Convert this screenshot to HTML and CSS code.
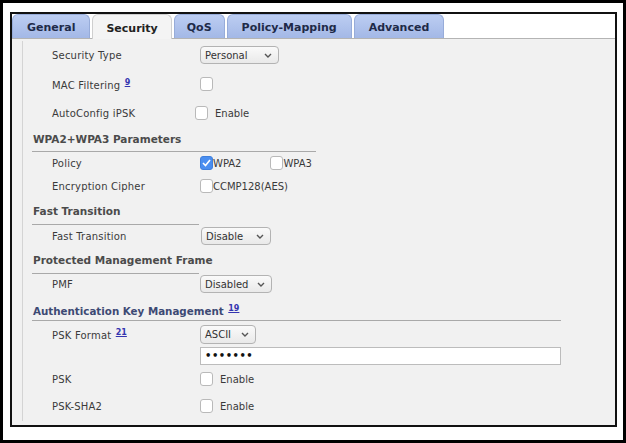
FILE: index.html
```html
<!DOCTYPE html>
<html lang="en">
<head>
    <meta charset="UTF-8">
    <title>WLAN Security</title>
    <link rel="stylesheet" href="styles.css">
</head>
<body>
    <div class="frame">
        <div class="window">
            <nav class="tabs">
                <span class="tab">General</span>
                <span class="tab active">Security</span>
                <span class="tab narrow">QoS</span>
                <span class="tab">Policy-Mapping</span>
                <span class="tab">Advanced</span>
            </nav>
            <div class="panel">
                <div class="form">
                    <div class="row h28">
                        <span class="label">Security Type</span>
                        <span class="select w-personal">Personal
                            <svg class="chev" width="8" height="5" viewBox="0 0 8 5"><path d="M1 1l3 3 3-3" fill="none" stroke="#555" stroke-width="1.4"/></svg>
                        </span>
                    </div>
                    <div class="row h30">
                        <span class="label">MAC Filtering <a class="ref">9</a></span>
                        <span class="opt"><span class="box"></span></span>
                    </div>
                    <div class="row h28">
                        <span class="label">AutoConfig iPSK</span>
                        <span class="opt shift-left"><span class="box"></span><span class="opt-text spaced">Enable</span></span>
                    </div>

                    <div class="heading line-mid">WPA2+WPA3 Parameters</div>
                    <div class="row h22">
                        <span class="label">Policy</span>
                        <span class="opts">
                            <span class="opt"><span class="box checked"><svg width="9" height="8" viewBox="0 0 9 8"><path d="M1 4l2.5 2.5L8 1" fill="none" stroke="#fff" stroke-width="1.6"/></svg></span><span class="opt-text">WPA2</span></span>
                            <span class="opt"><span class="box"></span><span class="opt-text">WPA3</span></span>
                        </span>
                    </div>
                    <div class="row h24">
                        <span class="label">Encryption Cipher</span>
                        <span class="opt"><span class="box"></span><span class="opt-text">CCMP128(AES)</span></span>
                    </div>

                    <div class="heading line-short">Fast Transition</div>
                    <div class="row h22">
                        <span class="label">Fast Transition</span>
                        <span class="select w-disable">Disable
                            <svg class="chev" width="8" height="5" viewBox="0 0 8 5"><path d="M1 1l3 3 3-3" fill="none" stroke="#555" stroke-width="1.4"/></svg>
                        </span>
                    </div>

                    <div class="heading line-short">Protected Management Frame</div>
                    <div class="row h20">
                        <span class="label">PMF</span>
                        <span class="select w-disabled">Disabled
                            <svg class="chev" width="8" height="5" viewBox="0 0 8 5"><path d="M1 1l3 3 3-3" fill="none" stroke="#555" stroke-width="1.4"/></svg>
                        </span>
                    </div>

                    <div class="heading line-long blue">Authentication Key Management <a class="ref">19</a></div>
                    <div class="row h26">
                        <span class="label">PSK Format <a class="ref">21</a></span>
                        <span class="select w-ascii">ASCII
                            <svg class="chev" width="8" height="5" viewBox="0 0 8 5"><path d="M1 1l3 3 3-3" fill="none" stroke="#555" stroke-width="1.4"/></svg>
                        </span>
                    </div>
                    <div class="row h18">
                        <span class="label"></span>
                        <span class="password">&bull;&bull;&bull;&bull;&bull;&bull;&bull;</span>
                    </div>
                    <div class="row h28">
                        <span class="label">PSK</span>
                        <span class="opt"><span class="box"></span><span class="opt-text spaced">Enable</span></span>
                    </div>
                    <div class="row h26">
                        <span class="label">PSK-SHA2</span>
                        <span class="opt"><span class="box"></span><span class="opt-text spaced">Enable</span></span>
                    </div>
                </div>
            </div>
        </div>
    </div>
</body>
</html>
```

FILE: styles.css
```css
body {
    margin: 0;
    padding: 0;
    background: #fff;
    font-family: 'DejaVu Sans', Verdana, sans-serif;
    font-size: 10px;
    color: #3c3c3c;
}
.frame {
    width: 626px;
    height: 443px;
    box-sizing: border-box;
    border: 3px solid #000;
    padding: 9px 6px 13px 7px;
    background: #fff;
}
.window {
    height: 100%;
    box-sizing: border-box;
    border: 2px solid #111;
    display: flex;
    flex-direction: column;
    background: #fff;
}
.tabs {
    display: flex;
    gap: 2px;
    height: 24px;
    border-bottom: 1px solid #b4b4b4;
}
.tab {
    display: flex;
    align-items: center;
    padding: 2px 14px 0;
    font-size: 11px;
    font-weight: bold;
    color: #1e2a48;
    background: linear-gradient(#bccdf2, #a3b8e6);
    border: 1px solid #97acd9;
    border-bottom: none;
    border-radius: 6px 6px 0 0;
}
.tab.narrow {
    padding: 2px 12px 0;
}
.tab.active {
    background: #f4f4f4;
    border-color: #cfcfcf;
    margin-bottom: -1px;
    padding: 2px 13px 0;
    color: #222;
}
.panel {
    flex: 1;
    background: #f1f1f1;
    padding: 2px 0 4px 10px;
    display: flex;
}
.form {
    flex: 1;
    border-left: 1px solid #d4d4d4;
    padding-left: 9px;
}
.row {
    display: grid;
    grid-template-columns: 168px auto;
    align-items: center;
}
.h18 { height: 18px; }
.h20 { height: 20px; }
.h22 { height: 22px; }
.h24 { height: 24px; }
.h26 { height: 26px; }
.h28 { height: 28px; }
.h30 { height: 30px; }
.label {
    padding-left: 20px;
    color: #3a3a3a;
    letter-spacing: 0.2px;
    white-space: nowrap;
}
.ref {
    font-size: 8px;
    font-weight: bold;
    color: #3535b0;
    text-decoration: underline;
    vertical-align: 4px;
    margin-left: 1px;
    letter-spacing: 0;
}
.heading {
    height: 24px;
    line-height: 24px;
    padding-left: 1px;
    font-size: 10.5px;
    font-weight: bold;
    color: #4b4b4b;
    border-bottom: 1px solid #a9a9a9;
}
.heading.line-short { height: 26px; line-height: 26px; width: 166px; white-space: nowrap; }
.heading.line-mid { width: 283px; }
.heading.line-long {
    width: 529px;
    height: 27px;
    line-height: 24px;
    box-sizing: border-box;
    padding-top: 3px;
    font-size: 10.3px;
}
.heading.blue { color: #3d4a74; }
.select {
    display: flex;
    align-items: center;
    justify-content: space-between;
    box-sizing: border-box;
    height: 18px;
    padding: 0 6px 0 4px;
    border: 1px solid #b3b3b3;
    border-radius: 4px;
    background: linear-gradient(#fafafa, #e9e9e9);
    color: #333;
}
.w-personal { width: 79px; }
.w-disable { width: 70px; margin-left: 1px; }
.w-disabled { width: 72px; }
.w-ascii { width: 56px; height: 19px; }
.opts {
    display: flex;
    gap: 29px;
}
.opt {
    display: flex;
    align-items: center;
}
.shift-left { margin-left: -5px; }
.box {
    width: 11px;
    height: 12px;
    border: 1px solid #b9b9b9;
    border-radius: 3px;
    background: #fff;
    display: flex;
    align-items: center;
    justify-content: center;
}
.box.checked {
    background: #4a8ef0;
    border-color: #3f7fdc;
}
.opt-text {
    color: #3a3a3a;
}
.opt-text.spaced {
    margin-left: 7px;
}
.password {
    width: 361px;
    height: 18px;
    box-sizing: border-box;
    border: 1px solid #bcbcbc;
    background: #fff;
    padding-left: 4px;
    font-size: 10px;
    font-weight: bold;
    color: #111;
    letter-spacing: 0.5px;
    line-height: 16px;
}
```
